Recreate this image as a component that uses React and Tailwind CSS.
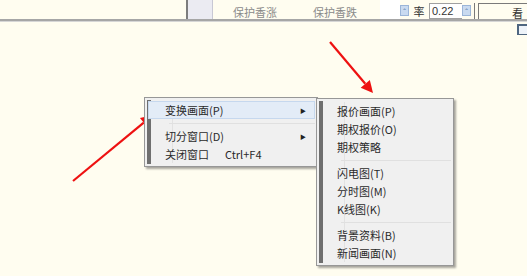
import React from "react";

const font = { fontFamily: '"Noto Sans CJK SC", "Liberation Sans", sans-serif' };

const MenuItem = ({ label, shortcut, sub, active }) => (
  <div
    className={`relative flex items-center h-[18px] ml-[3px] mr-[2px] border ${
      active ? "bg-[#e3ecf7] border-[#c6d8ee]" : "border-transparent"
    }`}
  >
    <span className="pl-[16px] w-[76px] whitespace-nowrap">{label}</span>
    {shortcut && <span className="whitespace-nowrap">{shortcut}</span>}
    {sub && <span className="absolute right-[8px] top-[4px] text-[6px] text-[#222]">▶</span>}
  </div>
);

const Sep = () => (
  <div className="h-[8px] flex items-center ml-[24px] mr-[2px]">
    <div className="h-px w-full bg-[#e0e0e0]" />
  </div>
);

const Menu = ({ children, className }) => (
  <div
    className={`absolute bg-[#f0f0f0] border border-[#979797] shadow-[2px_2px_2px_rgba(0,0,0,0.35)] py-[3px] text-[11px] text-[#2a2a2a] ${className}`}
    style={font}
  >
    <div className="absolute left-[2px] top-[2px] bottom-[2px] w-[4px] bg-[#6f6f6f]" />
    <div className="absolute left-[27px] top-[3px] bottom-[3px] w-px bg-[#e2e2e2]" />
    <div className="relative">{children}</div>
  </div>
);

const Arrow = ({ x1, y1, x2, y2 }) => {
  const a = Math.atan2(y2 - y1, x2 - x1);
  const l = 12;
  const w = 6;
  const bx = x2 - l * Math.cos(a);
  const by = y2 - l * Math.sin(a);
  const p1 = `${bx + w * Math.sin(a)},${by - w * Math.cos(a)}`;
  const p2 = `${bx - w * Math.sin(a)},${by + w * Math.cos(a)}`;
  return (
    <g>
      <line x1={x1} y1={y1} x2={bx} y2={by} stroke="#ee1111" strokeWidth="2.2" />
      <polygon points={`${x2},${y2} ${p1} ${p2}`} fill="#ee1111" />
    </g>
  );
};

const App = () => {
  return (
    <div className="relative w-[527px] h-[276px] overflow-hidden bg-[#fffdf0]" style={font}>
      {/* top strip */}
      <div className="flex h-[19px] text-[11px] text-[#8a8a8a]">
        <div className="w-[186px]" />
        <div className="w-[2px] bg-[#7d7d7d]" />
        <div className="w-[25px] bg-[#ebebf2] border-r border-[#c8c8d4]" />
        <div className="w-[20px]" />
        <div className="w-[80px] flex items-end leading-none pb-[1px]">保护香涨</div>
        <div className="w-[67px] flex items-end leading-none pb-[1px]">保护香跌</div>
        <div className="w-[20px] bg-white" />
        <div className="w-[9px] mt-[5px] h-[11px] bg-[#c9daf0] border border-[#9bb5d8] flex items-center justify-center text-[6px] text-[#4a6f9f]">⌃</div>
        <div className="w-[20px] flex items-end justify-center leading-none pb-[2px] text-[#333]">率</div>
        <div className="w-[33px] mt-[3px] bg-white border border-[#a0a0a0] border-r-0 text-[11px] text-[#333] leading-none pt-[2px] pl-[2px]" style={{ fontFamily: '"Liberation Sans", sans-serif' }}>0.22</div>
        <div className="w-[9px] mt-[5px] h-[11px] bg-[#c9daf0] border border-[#9bb5d8] flex items-center justify-center text-[6px] text-[#4a6f9f]">⌃</div>
        <div className="w-[3px]" />
        <div className="w-px mt-[3px] bg-[#7a7a7a]" />
        <div className="w-[3px]" />
        <div className="flex-1 mt-[3px] border border-[#7a7a7a] border-r-0 border-b-0 text-[#333] text-right pr-[4px] leading-none pt-[4px]">看</div>
      </div>
      <div className="h-[2px] bg-[#a6a6a6]" />
      <div className="h-px bg-[#d6d6d6]" />
      <div className="flex justify-end mt-[2px]">
        <div className="w-[10px] h-[11px] border-l-2 border-t-2 border-b border-[#4f6680] bg-[#eef3f9]" />
      </div>

      {/* arrows */}
      <svg className="absolute left-0 top-0" width="527" height="276">
        <Arrow x1={73} y1={181} x2={153} y2={115} />
        <Arrow x1={330} y1={42} x2={373} y2={93} />
      </svg>

      {/* context menu */}
      <Menu className="left-[144px] top-[97px] w-[174px]">
        <MenuItem label="变换画面(P)" sub active />
        <Sep />
        <MenuItem label="切分窗口(D)" sub />
        <MenuItem label="关闭窗口" shortcut="Ctrl+F4" />
      </Menu>

      {/* submenu */}
      <Menu className="left-[316px] top-[98px] w-[138px]">
        <MenuItem label="报价画面(P)" />
        <MenuItem label="期权报价(O)" />
        <MenuItem label="期权策略" />
        <Sep />
        <MenuItem label="闪电图(T)" />
        <MenuItem label="分时图(M)" />
        <MenuItem label="K线图(K)" />
        <Sep />
        <MenuItem label="背景资料(B)" />
        <MenuItem label="新闻画面(N)" />
      </Menu>
    </div>
  );
};

export default App;
